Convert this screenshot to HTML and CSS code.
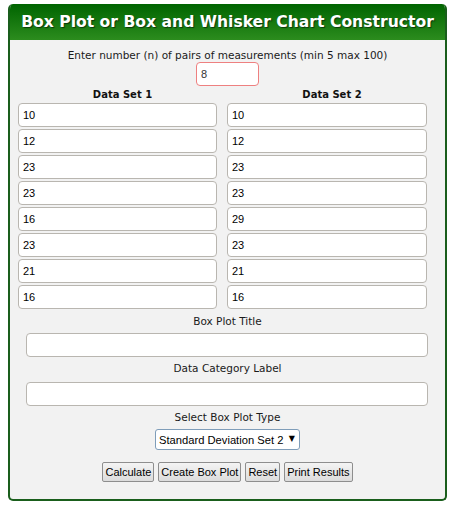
FILE: index.html
```html
<!DOCTYPE html>
<html>
<head>
<meta charset="utf-8">
<link rel="stylesheet" href="styles.css">
</head>
<body>
<div class="card">
  <div class="header">Box Plot or Box and Whisker Chart Constructor</div>
  <div class="body">
    <div class="label first">Enter number (n) of pairs of measurements (min 5 max 100)</div>
    <input class="field n-field" type="text" value="8">
    <div class="sets">
      <div class="set-head">Data Set 1</div>
      <div class="set-head">Data Set 2</div>
      <input class="field cell" type="text" value="10"><input class="field cell" type="text" value="10">
      <input class="field cell" type="text" value="12"><input class="field cell" type="text" value="12">
      <input class="field cell" type="text" value="23"><input class="field cell" type="text" value="23">
      <input class="field cell" type="text" value="23"><input class="field cell" type="text" value="23">
      <input class="field cell" type="text" value="16"><input class="field cell" type="text" value="29">
      <input class="field cell" type="text" value="23"><input class="field cell" type="text" value="23">
      <input class="field cell" type="text" value="21"><input class="field cell" type="text" value="21">
      <input class="field cell" type="text" value="16"><input class="field cell" type="text" value="16">
    </div>
    <div class="label l-title">Box Plot Title</div>
    <input class="field wide w-title" type="text" value="">
    <div class="label l-cat">Data Category Label</div>
    <input class="field wide w-cat" type="text" value="">
    <div class="label l-type">Select Box Plot Type</div>
    <div class="select-wrap">
      <select class="select">
        <option>Standard Deviation Set 2</option>
      </select>
      <span class="arrow">&#9660;</span>
    </div>
    <div class="buttons">
      <button class="btn">Calculate</button>
      <button class="btn">Create Box Plot</button>
      <button class="btn">Reset</button>
      <button class="btn">Print Results</button>
    </div>
  </div>
</div>
</body>
</html>
```
FILE: styles.css
```css
html, body {
  margin: 0;
  padding: 0;
  background: #ffffff;
}
body {
  padding: 4px 8px 0 8px;
}
.card {
  border: 2px solid #1a5e1c;
  border-top: none;
  border-radius: 5px;
  background: #f2f2f2;
  overflow: hidden;
  height: 497px;
  box-sizing: border-box;
}
.header {
  margin: 0 -2px;
  height: 36px;
  line-height: 36px;
  background: linear-gradient(#006400, #2c8c1e);
  color: #ffffff;
  font-family: "DejaVu Sans", Verdana, sans-serif;
  font-weight: bold;
  font-size: 15.6px;
  text-align: center;
  text-shadow: 1px 1px 1px #0a3a0a;
  border-radius: 5px 5px 0 0;
}
.body {
  display: flex;
  flex-direction: column;
  align-items: center;
}
.label {
  font-family: "DejaVu Sans", Verdana, sans-serif;
  font-size: 10.5px;
  line-height: 12px;
  color: #1a1a1a;
  text-align: center;
}
.label.first { margin-top: 9px; }
.field {
  box-sizing: border-box;
  height: 24px;
  border: 1px solid #b9b6b0;
  border-radius: 4px;
  background: #ffffff;
  font-family: "Liberation Sans", Arial, sans-serif;
  font-size: 11px;
  color: #000;
  padding: 0 4px;
  margin: 0;
  outline: none;
}
.n-field {
  margin-top: 1px;
  width: 63px;
  border-color: #ee8080;
  color: #333;
}
.sets {
  align-self: flex-start;
  margin-left: 8px;
  margin-top: 3px;
  display: grid;
  grid-template-columns: 209px 210px;
  row-gap: 2px;
}
.set-head {
  font-family: "DejaVu Sans", Verdana, sans-serif;
  font-weight: bold;
  font-size: 10px;
  line-height: 12px;
  text-align: center;
  color: #111;
}
.cell {
  width: 199px;
}
.cell:nth-child(even) { width: 200px; }
.wide {
  width: 402px;
  margin-left: -1px;
}
.l-title { margin-top: 6px; }
.w-title { margin-top: 6px; }
.l-cat { margin-top: 5px; }
.w-cat { margin-top: 8px; }
.l-type { margin-top: 5px; }
.select-wrap {
  position: relative;
  margin-top: 6px;
}
.select {
  -webkit-appearance: none;
  appearance: none;
  box-sizing: border-box;
  width: 145px;
  height: 21px;
  border: 1px solid #7f9db9;
  border-radius: 3px;
  background: #ffffff;
  font-family: "Liberation Sans", Arial, sans-serif;
  font-size: 11.2px;
  color: #000;
  padding: 0 0 0 3px;
  margin: 0;
  outline: none;
}
.arrow {
  position: absolute;
  right: 5px;
  top: 4px;
  font-family: "DejaVu Sans", sans-serif;
  font-size: 8px;
  line-height: 12px;
  color: #000;
  pointer-events: none;
}
.buttons {
  margin-top: 12px;
  display: flex;
  gap: 4px;
  justify-content: center;
}
.btn {
  box-sizing: border-box;
  height: 20px;
  padding: 0 2px;
  margin: 0;
  border: 1px solid #8e8e8e;
  border-radius: 2px;
  background: linear-gradient(#f4f4f4, #dcdcdc);
  font-family: "Liberation Sans", Arial, sans-serif;
  font-size: 11px;
  color: #000;
}
```
